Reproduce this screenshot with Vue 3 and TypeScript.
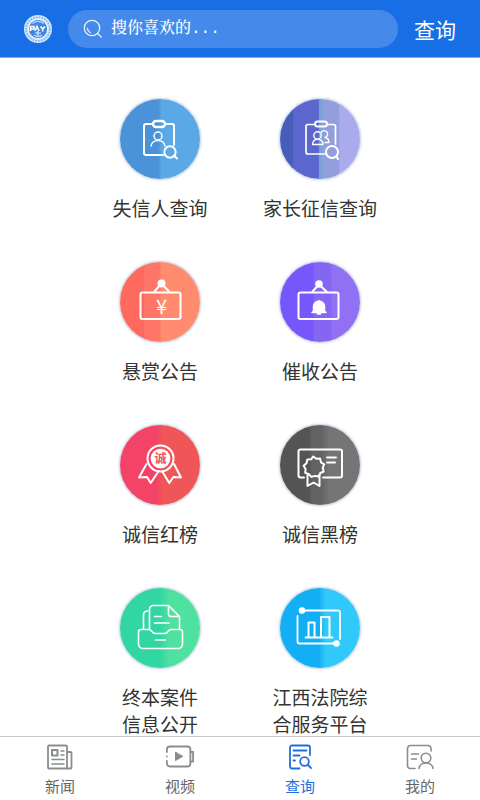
<script setup lang="ts">
import { ref } from 'vue'

interface Service {
  icon: string
  label: string
}

interface Tab {
  id: string
  label: string
}

const keyword = ref('')
const activeTab = ref('query')

const services: Service[] = [
  { icon: 'person', label: '失信人查询' },
  { icon: 'parents', label: '家长征信查询' },
  { icon: 'reward', label: '悬赏公告' },
  { icon: 'notice', label: '催收公告' },
  { icon: 'red', label: '诚信红榜' },
  { icon: 'black', label: '诚信黑榜' },
  { icon: 'archive', label: '终本案件\n信息公开' },
  { icon: 'platform', label: '江西法院综\n合服务平台' },
]

const tabs: Tab[] = [
  { id: 'news', label: '新闻' },
  { id: 'video', label: '视频' },
  { id: 'query', label: '查询' },
  { id: 'mine', label: '我的' },
]
</script>

<template>
  <div class="app">
    <header class="header">
      <svg class="logo" viewBox="0 0 28 28" aria-hidden="true">
        <circle cx="14" cy="14" r="14" fill="#d3e6fa" />
        <circle cx="14" cy="14" r="11.8" fill="none" stroke="#7fb0ee" stroke-width="1.6" stroke-dasharray="1.6 1.2" />
        <circle cx="14" cy="14" r="9.6" fill="#3f86e2" stroke="#f2f8ff" stroke-width="1" />
        <path d="M8.5 8.5C11 5.6 17 5.6 19.5 8.5M10 20c2 2 6 2 8 0" fill="none" stroke="#b9d6f8" stroke-width="1.4" />
        <path d="M6.5 16v-4.500h3.500v2.500H7M11 16l2-4.500 2 4.500M16.500 11.500l2.200 2.500 2.300-2.500M18.700 14v2.500" fill="none" stroke="#fff" stroke-width="1.6" />
        <path d="M11 18h6M14 16v5" stroke="#e4f0fd" stroke-width="1.200" />
      </svg>
      <form class="search" @submit.prevent>
        <svg class="search-icon" viewBox="0 0 20 20" aria-hidden="true">
          <g fill="none" stroke="#e4effc" stroke-width="1.3" stroke-linecap="round">
            <circle cx="9" cy="9" r="7.700" />
            <path d="M14.600 14.600l3.700 3.400M4.500 9.500a4.700 4.700 0 0 0 3 4" />
          </g>
        </svg>
        <input v-model="keyword" class="search-input" type="text" placeholder="搜你喜欢的..." aria-label="搜索" />
      </form>
      <button class="submit" type="button">查询</button>
    </header>

    <main class="content">
      <nav class="services">
        <a v-for="s in services" :key="s.icon" class="service" href="#" @click.prevent>
          <span class="disc-wrap">
            <span class="disc" :class="s.icon">
              <svg class="glyph" viewBox="0 0 84 84" fill="none" stroke="#fff" stroke-width="2" stroke-linecap="round" stroke-linejoin="round" aria-hidden="true">
                <template v-if="s.icon === 'person'">
                  <path d="M34 27h-6a2 2 0 0 0-2 2v27a2 2 0 0 0 2 2h17M48 27h6a2 2 0 0 1 2 2v19" />
                  <rect x="35" y="24" width="12" height="6" rx="3" stroke-width="2.400" />
                  <g stroke-width="1.500"><circle cx="40" cy="39" r="4" /><path d="M33 49c1-7.500 13-7.500 14 0" /></g>
                  <circle cx="52" cy="55" r="5.700" />
                  <path d="M56.500 59l2.500 2.500" />
                </template>
                <template v-else-if="s.icon === 'parents'">
                  <path d="M36 27.500h-6a2 2 0 0 0-2 2V55a2 2 0 0 0 2 2h17M50 27.500h5.500a2 2 0 0 1 2 2V47" stroke-width="1.700" />
                  <rect x="37" y="24.500" width="12" height="5" rx="2.500" />
                  <g stroke-width="1.400">
                    <circle cx="39.500" cy="38.500" r="3.700" />
                    <path d="M34.500 47.500c0-7 10.500-7 10.500 0zM43 35.500a3.500 3.500 0 1 1 4 5c3 .5 4 2 4 5h-4" />
                  </g>
                  <circle cx="54" cy="55" r="6" />
                  <path d="M58.500 59.500l1.500 2.500" />
                </template>
                <template v-else-if="s.icon === 'reward'">
                  <rect x="22.500" y="32.500" width="40" height="26.500" rx="2" />
                  <path d="M36.500 31.500l6-7h2l6.500 7" />
                  <circle cx="43.500" cy="23.500" r="3" fill="#fff" />
                  <text class="yen" x="43.500" y="54">¥</text>
                </template>
                <template v-else-if="s.icon === 'notice'">
                  <rect x="20.500" y="32.500" width="40" height="26.500" rx="2" />
                  <path d="M34.500 31.500l5.500-6h2l6.500 6" />
                  <circle cx="41" cy="24" r="2.800" fill="#fff" />
                  <path d="M35.500 51v-4.500c0-7 11-7 11 0V51l1.500 1.500H34zM41 40.500v2M39.500 54h3" fill="#fff" stroke-width="1.500" />
                </template>
                <template v-else-if="s.icon === 'red'">
                  <path d="M28.500 41l-7.500 13.500 8-.5 3.700 6 8-12M44 48l7.300 12 4-6 7.700.5L56 41" />
                  <circle cx="42.500" cy="35.500" r="13" />
                  <circle cx="42.500" cy="35.500" r="9.800" fill="#fff" stroke="none" />
                  <text class="honor" x="42.500" y="40">诚</text>
                </template>
                <template v-else-if="s.icon === 'black'">
                  <path d="M26 54.500h-3.500a2 2 0 0 1-2-2v-24a2 2 0 0 1 2-2H62a2 2 0 0 1 2 2v24a2 2 0 0 1-2 2H45M49 34.500h9M49 39.500h8" />
                  <path d="M35.300 33.500l3 2.300 3.800-.2.900 3.700 3.200 2-1.500 3.500 1 3.700-3.400 1.500-1.600 3.500-3.700-.6-3.700 1-2.400-2.800-3.700-1.300.4-3.800-2-3.200 2.900-2.500.8-3.800 3.700-.2z" />
                  <path d="M29.500 52v11l6-3.500 6 3.500V52" />
                </template>
                <template v-else-if="s.icon === 'archive'">
                  <g stroke-width="1.600">
                    <path d="M25.500 43V29a4 4 0 0 1 4-4M31.500 43V23.500a4 4 0 0 1 4-4h15l11 11V43M50.500 19.500V28a2.500 2.500 0 0 0 2.500 2.500h8.500" />
                    <path d="M23 43.500h8c3 0 3 4 6 4h10c3 0 3-4 6-4h9a2.500 2.500 0 0 1 2.500 2.500v12a4.500 4.500 0 0 1-4.500 4.500H25a4.500 4.500 0 0 1-4.500-4.500V46a2.500 2.500 0 0 1 2.500-2.500z" />
                    <path d="M36.500 30.500h7M36.500 37h14.500M37.500 54h10" />
                  </g>
                </template>
                <template v-else>
                  <path d="M24 24.500h36a2 2 0 0 1 2 2V53M58 57.500H21.500a2 2 0 0 1-2-2V30M27.500 51.500h27" stroke-width="1.800" />
                  <path d="M30.500 51V36.500h6V51M43 51V31h8.500v20" />
                  <circle cx="24" cy="24.500" r="2.300" fill="#fff" />
                  <circle cx="58.500" cy="57.500" r="2.300" fill="#fff" />
                </template>
              </svg>
            </span>
          </span>
          <span class="service-label">{{ s.label }}</span>
        </a>
      </nav>
    </main>

    <nav class="tabbar">
      <button v-for="t in tabs" :key="t.id" type="button" class="tab" :class="{ active: activeTab === t.id }" @click="activeTab = t.id">
        <svg class="tab-icon" viewBox="0 0 28 28" fill="none" stroke="currentColor" stroke-width="1.800" stroke-linecap="round" stroke-linejoin="round" aria-hidden="true">
          <template v-if="t.id === 'news'">
            <path d="M21 25.500H3a1 1 0 0 1-1-1v-21a1 1 0 0 1 1-1h17a1 1 0 0 1 1 1zM21 9h3.500a1 1 0 0 1 1 1v14.500a1 1 0 0 1-1 1H21" />
            <path d="M6 7h5.500v5.500H6z" stroke-width="2" />
            <path d="M15 8h3M15 12h3M6 16.500h12M6 21h12" stroke-width="1.500" />
          </template>
          <template v-else-if="t.id === 'video'">
            <path d="M.9 9V6.500a3 3 0 0 1 3-3h17.500a3 3 0 0 1 3 3v14a3 3 0 0 1-3 3H3.900a3 3 0 0 1-3-3V18M.9 13.500v.1" />
            <path d="M24.500 9h2.600v9.500h-2.600" />
            <path d="M9.500 9.500v8l7-4z" fill="currentColor" stroke-width="1" />
          </template>
          <template v-else-if="t.id === 'query'">
            <path d="M13.500 25.500H6a2 2 0 0 1-2-2v-19a2 2 0 0 1 2-2h16a2 2 0 0 1 2 2V12M7.500 7.500h13M7.500 12.500h6M7.500 17.500h1.500" />
            <circle cx="18.500" cy="18.500" r="4.300" />
            <path d="M22 22l3 3" />
          </template>
          <template v-else>
            <path d="M9 25.500H4.500a3 3 0 0 1-3-3v-17a3 3 0 0 1 3-3h17.500a3 3 0 0 1 3 3V8M5.500 11h7M5.500 16h5" stroke-width="1.600" />
            <circle cx="20" cy="15" r="4.800" stroke-width="1.600" />
            <path d="M13 25.500c.5-7.500 13.500-7.500 14 0" stroke-width="1.600" />
          </template>
        </svg>
        <span>{{ t.label }}</span>
      </button>
    </nav>
  </div>
</template>

<style>
body {
  margin: 0;
  background: #fff;
}
</style>

<style scoped>
.app {
  display: flex;
  flex-direction: column;
  height: 100vh;
  font-family: "Noto Sans CJK SC", sans-serif;
  color: #333;
}

.header {
  display: flex;
  flex: none;
  align-items: center;
  gap: 16px;
  box-sizing: border-box;
  height: 57px;
  padding: 0 24px;
  background: #176ee5;
  box-shadow: 0 1px 0 #7fabeb;
}

.logo {
  flex: none;
  width: 28px;
  height: 28px;
}

.search {
  display: flex;
  flex: 1;
  align-items: center;
  gap: 8px;
  min-width: 0;
  height: 38px;
  padding: 0 16px 0 15px;
  box-sizing: border-box;
  border-radius: 19px;
  background: #458aea;
}

.search-icon {
  flex: none;
  width: 20px;
  height: 20px;
}

.search-input {
  flex: 1;
  min-width: 0;
  padding: 0;
  border: 0;
  outline: 0;
  background: none;
  color: #fff;
  font: 500 16px/24px "Liberation Mono", "Noto Serif CJK SC", "Noto Sans CJK SC", monospace;
}

.search-input::placeholder {
  color: #fff;
  opacity: 1;
}

.submit {
  flex: none;
  padding: 0;
  border: 0;
  background: none;
  color: #fff;
  font: 400 21px/30px "Noto Sans CJK SC", sans-serif;
}

.content {
  flex: 1;
  min-height: 0;
  overflow-y: auto;
  scrollbar-width: none;
}

.services {
  display: grid;
  grid-template-columns: 1fr 1fr;
  row-gap: 39px;
  padding: 40px 16.666% 16px;
}

.service {
  display: flex;
  flex-direction: column;
  align-items: center;
  gap: 13px;
  color: #333;
  text-decoration: none;
}

.disc-wrap {
  padding: 2px;
}

.disc {
  display: flex;
  align-items: center;
  justify-content: center;
  width: 80px;
  height: 80px;
  border-radius: 50%;
  box-shadow: 0 0 0 1px #d3dbe8, 0 0 3px 1px #cfd8e8;
}

.glyph {
  flex: none;
  width: 84px;
  height: 84px;
}

.yen {
  font: 400 20px "Noto Sans CJK SC", sans-serif;
  text-anchor: middle;
  fill: #fff;
  stroke: none;
}

.honor {
  font: 700 12px "Noto Sans CJK SC", sans-serif;
  text-anchor: middle;
  fill: #ef5067;
  stroke: none;
}

.person {
  background: linear-gradient(90deg, #4a93d9 48%, #5aa8e5 52%);
}

.parents {
  background: linear-gradient(90deg, #465eb9 16%, #5b67cf 17%, #5b67cf 48%, #68a4dc 49%, #8f9fdc 54%, #949fdd 73%, #a9abec 75%);
}

.reward {
  background: linear-gradient(90deg, #ff6a5e 30%, #ff7668 31%, #ff7668 49%, #ff8c6e 52%);
}

.notice {
  background: linear-gradient(90deg, #7657fc 41%, #8566f3 43%, #8566f3 63%, #9170f4 66%);
}

.red {
  background: linear-gradient(90deg, #f34468 46%, #f05658 54%);
}

.black {
  background: linear-gradient(90deg, #545454 36%, #626262 40%, #626262 51%, #757575 62%);
}

.archive {
  background: linear-gradient(90deg, #32d6a1 50%, #4fe1a0 62%);
}

.platform {
  background: linear-gradient(90deg, #13aff4 49%, #30c9fa 57%);
}

.service-label {
  font-size: 19px;
  line-height: 27px;
  text-align: center;
  white-space: pre;
}

.tabbar {
  display: grid;
  flex: none;
  grid-template-columns: repeat(4, 1fr);
  border-top: 1px solid #c8c8c8;
  background: #fff;
}

.tab {
  display: flex;
  flex-direction: column;
  align-items: center;
  gap: 5px;
  padding: 6px 0 4px;
  border: 0;
  background: none;
  color: #898d8f;
  font: 400 15px/20px "Noto Sans CJK SC", sans-serif;
}

.tab span {
  color: #666;
}

.tab-icon {
  width: 28px;
  height: 28px;
}

.tab.active,
.tab.active span {
  color: #1e6fdc;
}
</style>
